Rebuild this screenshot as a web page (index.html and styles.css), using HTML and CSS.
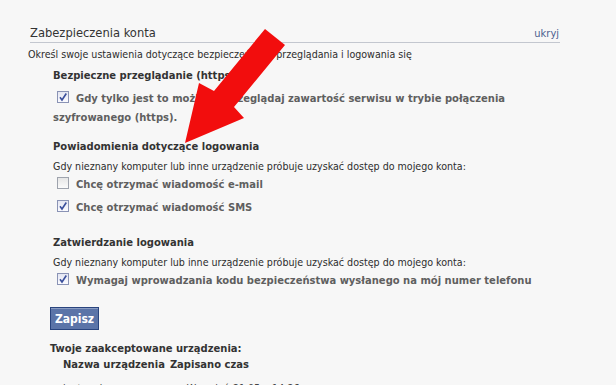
FILE: index.html
```html
<!DOCTYPE html>
<html lang="pl">
<head>
<meta charset="utf-8">
<title>Zabezpieczenia konta</title>
<link rel="stylesheet" href="styles.css">
</head>
<body>
<div class="panel">
  <div class="title-row">
    <span class="title">Zabezpieczenia konta</span>
    <a class="hide-link">ukryj</a>
  </div>
  <p class="desc">Określ swoje ustawienia dotyczące bezpieczeństwa przeglądania i logowania się</p>

  <div class="section s1">
    <h3 class="sec-head">Bezpieczne przeglądanie (https)</h3>
    <p class="opt wrap"><span class="cb checked"><svg viewBox="0 0 12 12" width="12" height="12"><path d="M3 6.2 L5 9 L9.3 2.5" fill="none" stroke="#3a4f9c" stroke-width="1.6"/></svg></span>Gdy tylko jest to możliwe, przeglądaj zawartość serwisu w trybie połączenia szyfrowanego (https).</p>
  </div>

  <div class="section s2">
    <h3 class="sec-head">Powiadomienia dotyczące logowania</h3>
    <p class="sub">Gdy nieznany komputer lub inne urządzenie próbuje uzyskać dostęp do mojego konta:</p>
    <p class="opt"><span class="cb"></span>Chcę otrzymać wiadomość e-mail</p>
    <p class="opt opt-next"><span class="cb checked"><svg viewBox="0 0 12 12" width="12" height="12"><path d="M3 6.2 L5 9 L9.3 2.5" fill="none" stroke="#3a4f9c" stroke-width="1.6"/></svg></span>Chcę otrzymać wiadomość SMS</p>
  </div>

  <div class="section s3">
    <h3 class="sec-head">Zatwierdzanie logowania</h3>
    <p class="sub">Gdy nieznany komputer lub inne urządzenie próbuje uzyskać dostęp do mojego konta:</p>
    <p class="opt"><span class="cb checked"><svg viewBox="0 0 12 12" width="12" height="12"><path d="M3 6.2 L5 9 L9.3 2.5" fill="none" stroke="#3a4f9c" stroke-width="1.6"/></svg></span>Wymagaj wprowadzania kodu bezpieczeństwa wysłanego na mój numer telefonu</p>
  </div>

  <button class="save">Zapisz</button>

  <h3 class="devices-head">Twoje zaakceptowane urządzenia:</h3>
  <div class="devices">
    <div class="dev-row dev-head"><span>Nazwa urządzenia</span><span>Zapisano czas</span></div>
    <div class="dev-row dev-item"><span>laptop domowy</span><span>Wrzesień 21 05 o 14:26</span></div>
  </div>
</div>

<svg class="arrow" width="616" height="385" viewBox="0 0 616 385">
  <polygon points="265,29 285,45 234,107 244,118 185,143 199,83 214,91" fill="#f20d0d"/>
</svg>
</body>
</html>
```

FILE: styles.css
```css
html, body {
  margin: 0;
  padding: 0;
}
body {
  width: 616px;
  height: 385px;
  overflow: hidden;
  background: #f7f7f7;
  color: #333;
  font-family: "DejaVu Sans Condensed", "DejaVu Sans", sans-serif;
  font-stretch: condensed;
  position: relative;
}
.panel {
  padding: 24px 0 0 28px;
  width: 532px;
}
.title-row {
  margin-left: 2px;
  width: 530px;
  display: flex;
  justify-content: space-between;
  align-items: baseline;
  border-bottom: 1px solid #c3c7cf;
  height: 18px;
}
.title {
  font-size: 12.8px;
  line-height: 18px;
  color: #333;
}
.hide-link {
  font-size: 11px;
  color: #4d5f8f;
  padding-right: 1px;
}
.desc {
  margin: 3px 0 0;
  font-size: 10.6px;
  line-height: 16px;
  color: #2d2d2d;
}
.section {
  margin-left: 25px;
  width: 507px;
}
.sec-head {
  margin: 0;
  font-size: 11.1px;
  font-weight: bold;
  line-height: 16px;
  color: #333;
}
.s1 { margin-top: 6px; }
.s2 { margin-top: 12px; }
.s3 { margin-top: 18px; }
.sub {
  margin: 3px 0 0;
  font-size: 10.6px;
  line-height: 16px;
  color: #2d2d2d;
}
.opt {
  margin: 1px 0 0;
  font-size: 11.1px;
  font-weight: bold;
  line-height: 19px;
  color: #5f5f5f;
}
.s1 .opt { margin-top: 5px; }
.opt-next { margin-top: 4px; }
.cb {
  display: inline-block;
  box-sizing: border-box;
  width: 12px;
  height: 12px;
  margin: 0 7px 0 4px;
  vertical-align: -1px;
  border: 1px solid #9ea3ad;
  background: linear-gradient(#e6e6e6, #fbfbfb);
  position: relative;
}
.cb svg {
  position: absolute;
  left: -1px;
  top: -1px;
}
.cb.checked {
  border-color: #8a93b5;
  background: linear-gradient(#e4e6f2, #fbfbff);
}
.save {
  display: block;
  margin: 17px 0 0 22px;
  width: 49px;
  height: 23px;
  padding: 0;
  background: #5b74a8;
  border: 1px solid #29447e;
  box-shadow: inset 0 1px 0 #8a9cc2;
  color: #fff;
  font-family: inherit;
  font-stretch: condensed;
  font-size: 12px;
  font-weight: bold;
}
.devices-head {
  margin: 11px 0 0 22px;
  font-size: 11.1px;
  line-height: 16px;
  font-weight: bold;
  color: #333;
}
.devices {
  margin-left: 35px;
}
.dev-row {
  display: flex;
  gap: 5px;
  font-size: 11.1px;
  line-height: 16px;
}
.dev-head {
  font-weight: bold;
}
.dev-item {
  margin-top: 7px;
  color: #444;
  font-size: 10.6px;
  gap: 50px;
}
.arrow {
  position: absolute;
  left: 0;
  top: 0;
  pointer-events: none;
}
```
